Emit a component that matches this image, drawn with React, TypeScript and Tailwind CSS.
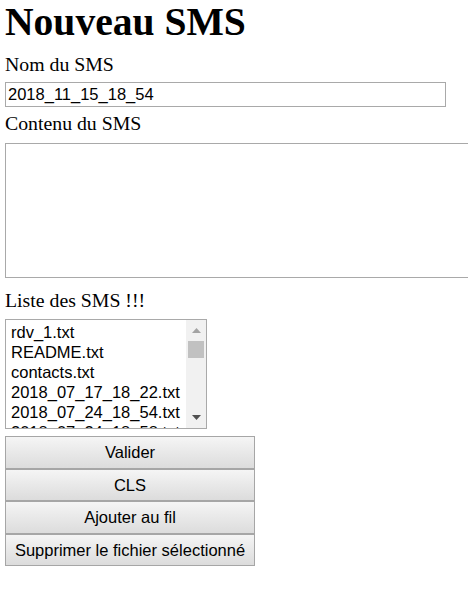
import React from 'react';

const files = [
  'rdv_1.txt',
  'README.txt',
  'contacts.txt',
  '2018_07_17_18_22.txt',
  '2018_07_24_18_54.txt',
  '2018_07_24_18_58.txt',
];

const buttons = [
  { label: 'Valider', h: 'h-[33px]' },
  { label: 'CLS', h: 'h-[32px]' },
  { label: 'Ajouter au fil', h: 'h-[33px]' },
  { label: 'Supprimer le fichier sélectionné', h: 'h-[32px]' },
];

export default function App() {
  return (
    <div className="min-h-screen w-full overflow-hidden bg-white pl-[5px] font-['Liberation_Serif',serif] text-black">
      <h1 className="text-[39.6px] font-bold leading-[44px]">Nouveau SMS</h1>

      {/* Nom */}
      <label className="mt-[9px] block text-[19.8px] leading-[23px]">Nom du SMS</label>
      <input
        type="text"
        readOnly
        value="2018_11_15_18_54"
        className="mt-[6px] block h-[25px] w-[441px] border border-[#a9a9a9] px-[2px] font-['Liberation_Sans',Arial,sans-serif] text-[16.5px] text-black outline-none"
      />

      {/* Contenu */}
      <label className="mt-[5px] block text-[19.8px] leading-[23px]">Contenu du SMS</label>
      <textarea
        readOnly
        className="mt-[8px] block h-[135px] w-[520px] resize-none border border-[#a9a9a9] outline-none"
      />

      {/* Liste */}
      <label className="mt-[11px] block text-[19.8px] leading-[23px]">Liste des SMS !!!</label>
      <div className="mt-[7px] flex h-[110px] w-[202px] overflow-hidden border border-[#a9a9a9] font-['Liberation_Sans',Arial,sans-serif] text-[16.5px]">
        <div className="flex-1 overflow-hidden pl-[5px] pt-[2px]">
          {files.map((f) => (
            <div key={f} className="h-[20px] whitespace-nowrap leading-[20px]">
              {f}
            </div>
          ))}
        </div>
        <div className="flex w-[20px] flex-col items-center bg-[#f1f1f1]">
          <div className="flex h-[21px] w-full items-center justify-center">
            <svg width="9" height="5" viewBox="0 0 9 5">
              <path d="M0 5 L4.5 0 L9 5 Z" fill="#a3a3a3" />
            </svg>
          </div>
          <div className="h-[17px] w-[16px] bg-[#c1c1c1]" />
          <div className="flex-1" />
          <div className="flex h-[21px] w-full items-center justify-center">
            <svg width="9" height="5" viewBox="0 0 9 5">
              <path d="M0 0 L9 0 L4.5 5 Z" fill="#505050" />
            </svg>
          </div>
        </div>
      </div>

      {/* Actions */}
      <div className="mt-[7px] flex w-[250px] flex-col">
        {buttons.map((b) => (
          <button
            key={b.label}
            className={`${b.h} w-full border border-[#a6a6a6] bg-linear-to-b from-[#f5f5f5] to-[#dcdcdc] font-['Liberation_Sans',Arial,sans-serif] text-[16.5px] text-black`}
          >
            {b.label}
          </button>
        ))}
      </div>
    </div>
  );
}
